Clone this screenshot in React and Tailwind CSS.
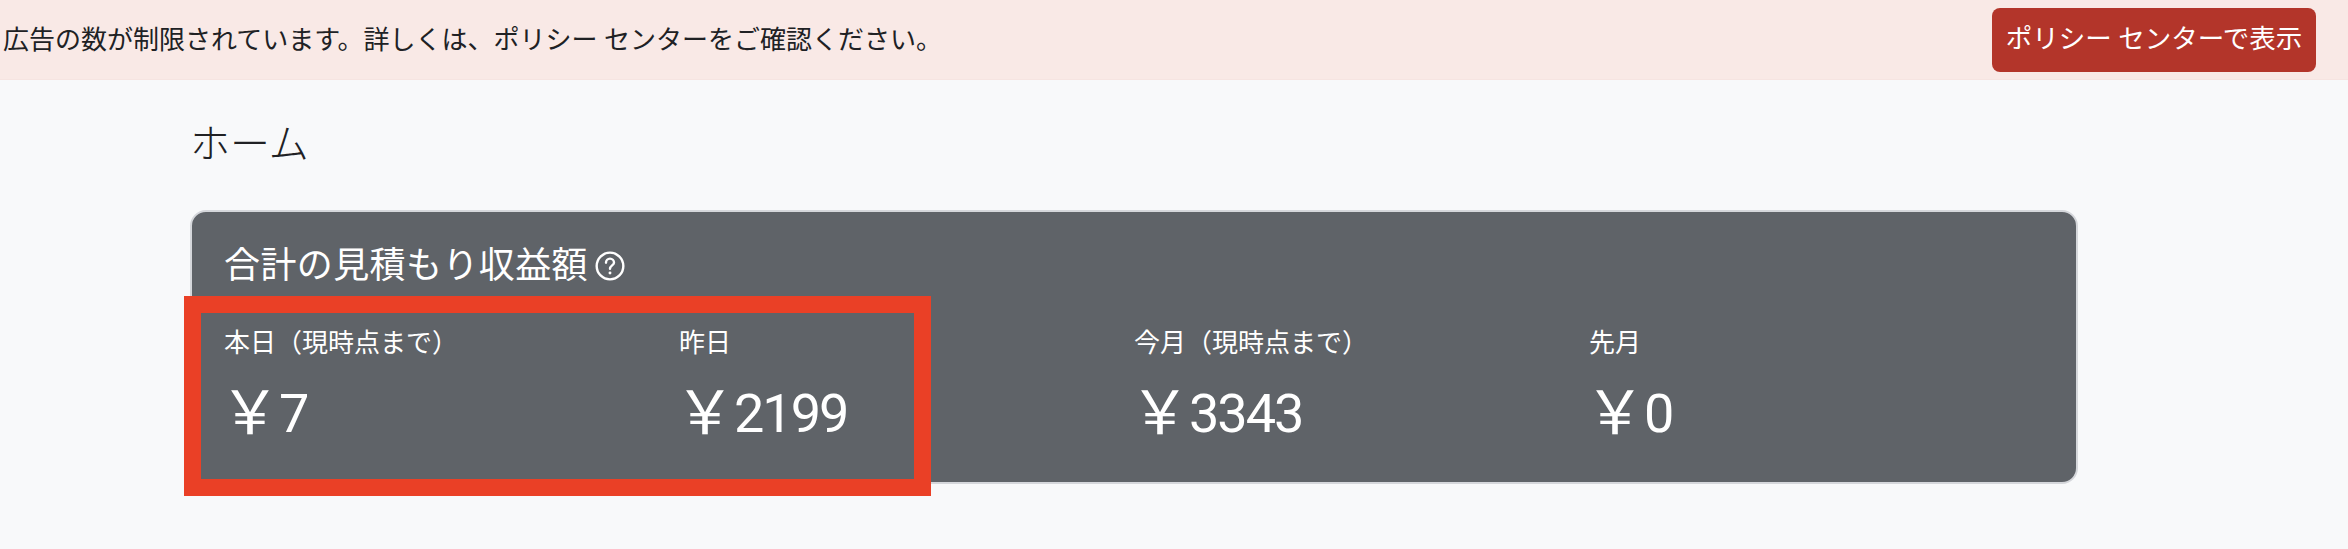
const FONT = "font-['Roboto','Noto_Sans_CJK_JP',sans-serif]";

const stats = [
  { label: "本日（現時点まで）", value: "7" },
  { label: "昨日", value: "2199" },
  { label: "今月（現時点まで）", value: "3343" },
  { label: "先月", value: "0" },
];

function HelpIcon() {
  return (
    <svg viewBox="0 0 24 24" className="w-[32px] h-[32px] ml-[6px]" fill="none" stroke="currentColor" strokeWidth="1.8">
      <circle cx="12" cy="12" r="10" />
      <path d="M9 9.5a3 3 0 0 1 6 0c0 2-3 2.2-3 4.6" strokeLinecap="round" />
      <circle cx="12" cy="17.3" r="1.1" fill="currentColor" stroke="none" />
    </svg>
  );
}

export default function App() {
  return (
    <div className={`min-h-[549px] bg-[#f8f9fa] text-[#202124] ${FONT}`}>
      <div className="h-20 bg-[#f9e9e6] border-b border-[#f6e4e1] flex items-center justify-between pl-[3px] pr-8">
        <p className="text-[26px] leading-none">広告の数が制限されています。詳しくは、ポリシー センターをご確認ください。</p>
        <button className="h-16 w-[324px] rounded-lg bg-[#b3352a] text-white text-[26.5px] leading-none">
          ポリシー センターで表示
        </button>
      </div>

      <div className="pl-[190px] w-[2078px]">
        <h1 className="pt-[38px] text-[40px] leading-[54px] font-light">ホーム</h1>

        <div className="relative mt-[38px] h-[274px] rounded-2xl border-2 border-[#d5d7db] bg-[#5f6368] text-white px-[32px]">
          <div className="flex items-center pt-[30px] h-[78px] text-[36px] leading-none font-normal tracking-[0.4px]">
            合計の見積もり収益額
            <HelpIcon />
          </div>
          <div className="grid grid-cols-4 mt-[37px]">
            {stats.map((s) => (
              <div key={s.label}>
                <div className="text-[26px] leading-8 font-normal">{s.label}</div>
                <div className="mt-[25px] flex items-center h-[60px] text-[54px] leading-[60px] font-normal">
                  <span className="w-[52px] flex justify-center text-[60px]">{"\uFFE5"}</span>
                  <span className="ml-[3px] tracking-[-2px]">{s.value}</span>
                </div>
              </div>
            ))}
          </div>
          <div className="absolute left-[-8px] top-[84px] w-[747px] h-[200px] border-[17px] border-[#ea4026]" />
        </div>
      </div>
    </div>
  );
}
